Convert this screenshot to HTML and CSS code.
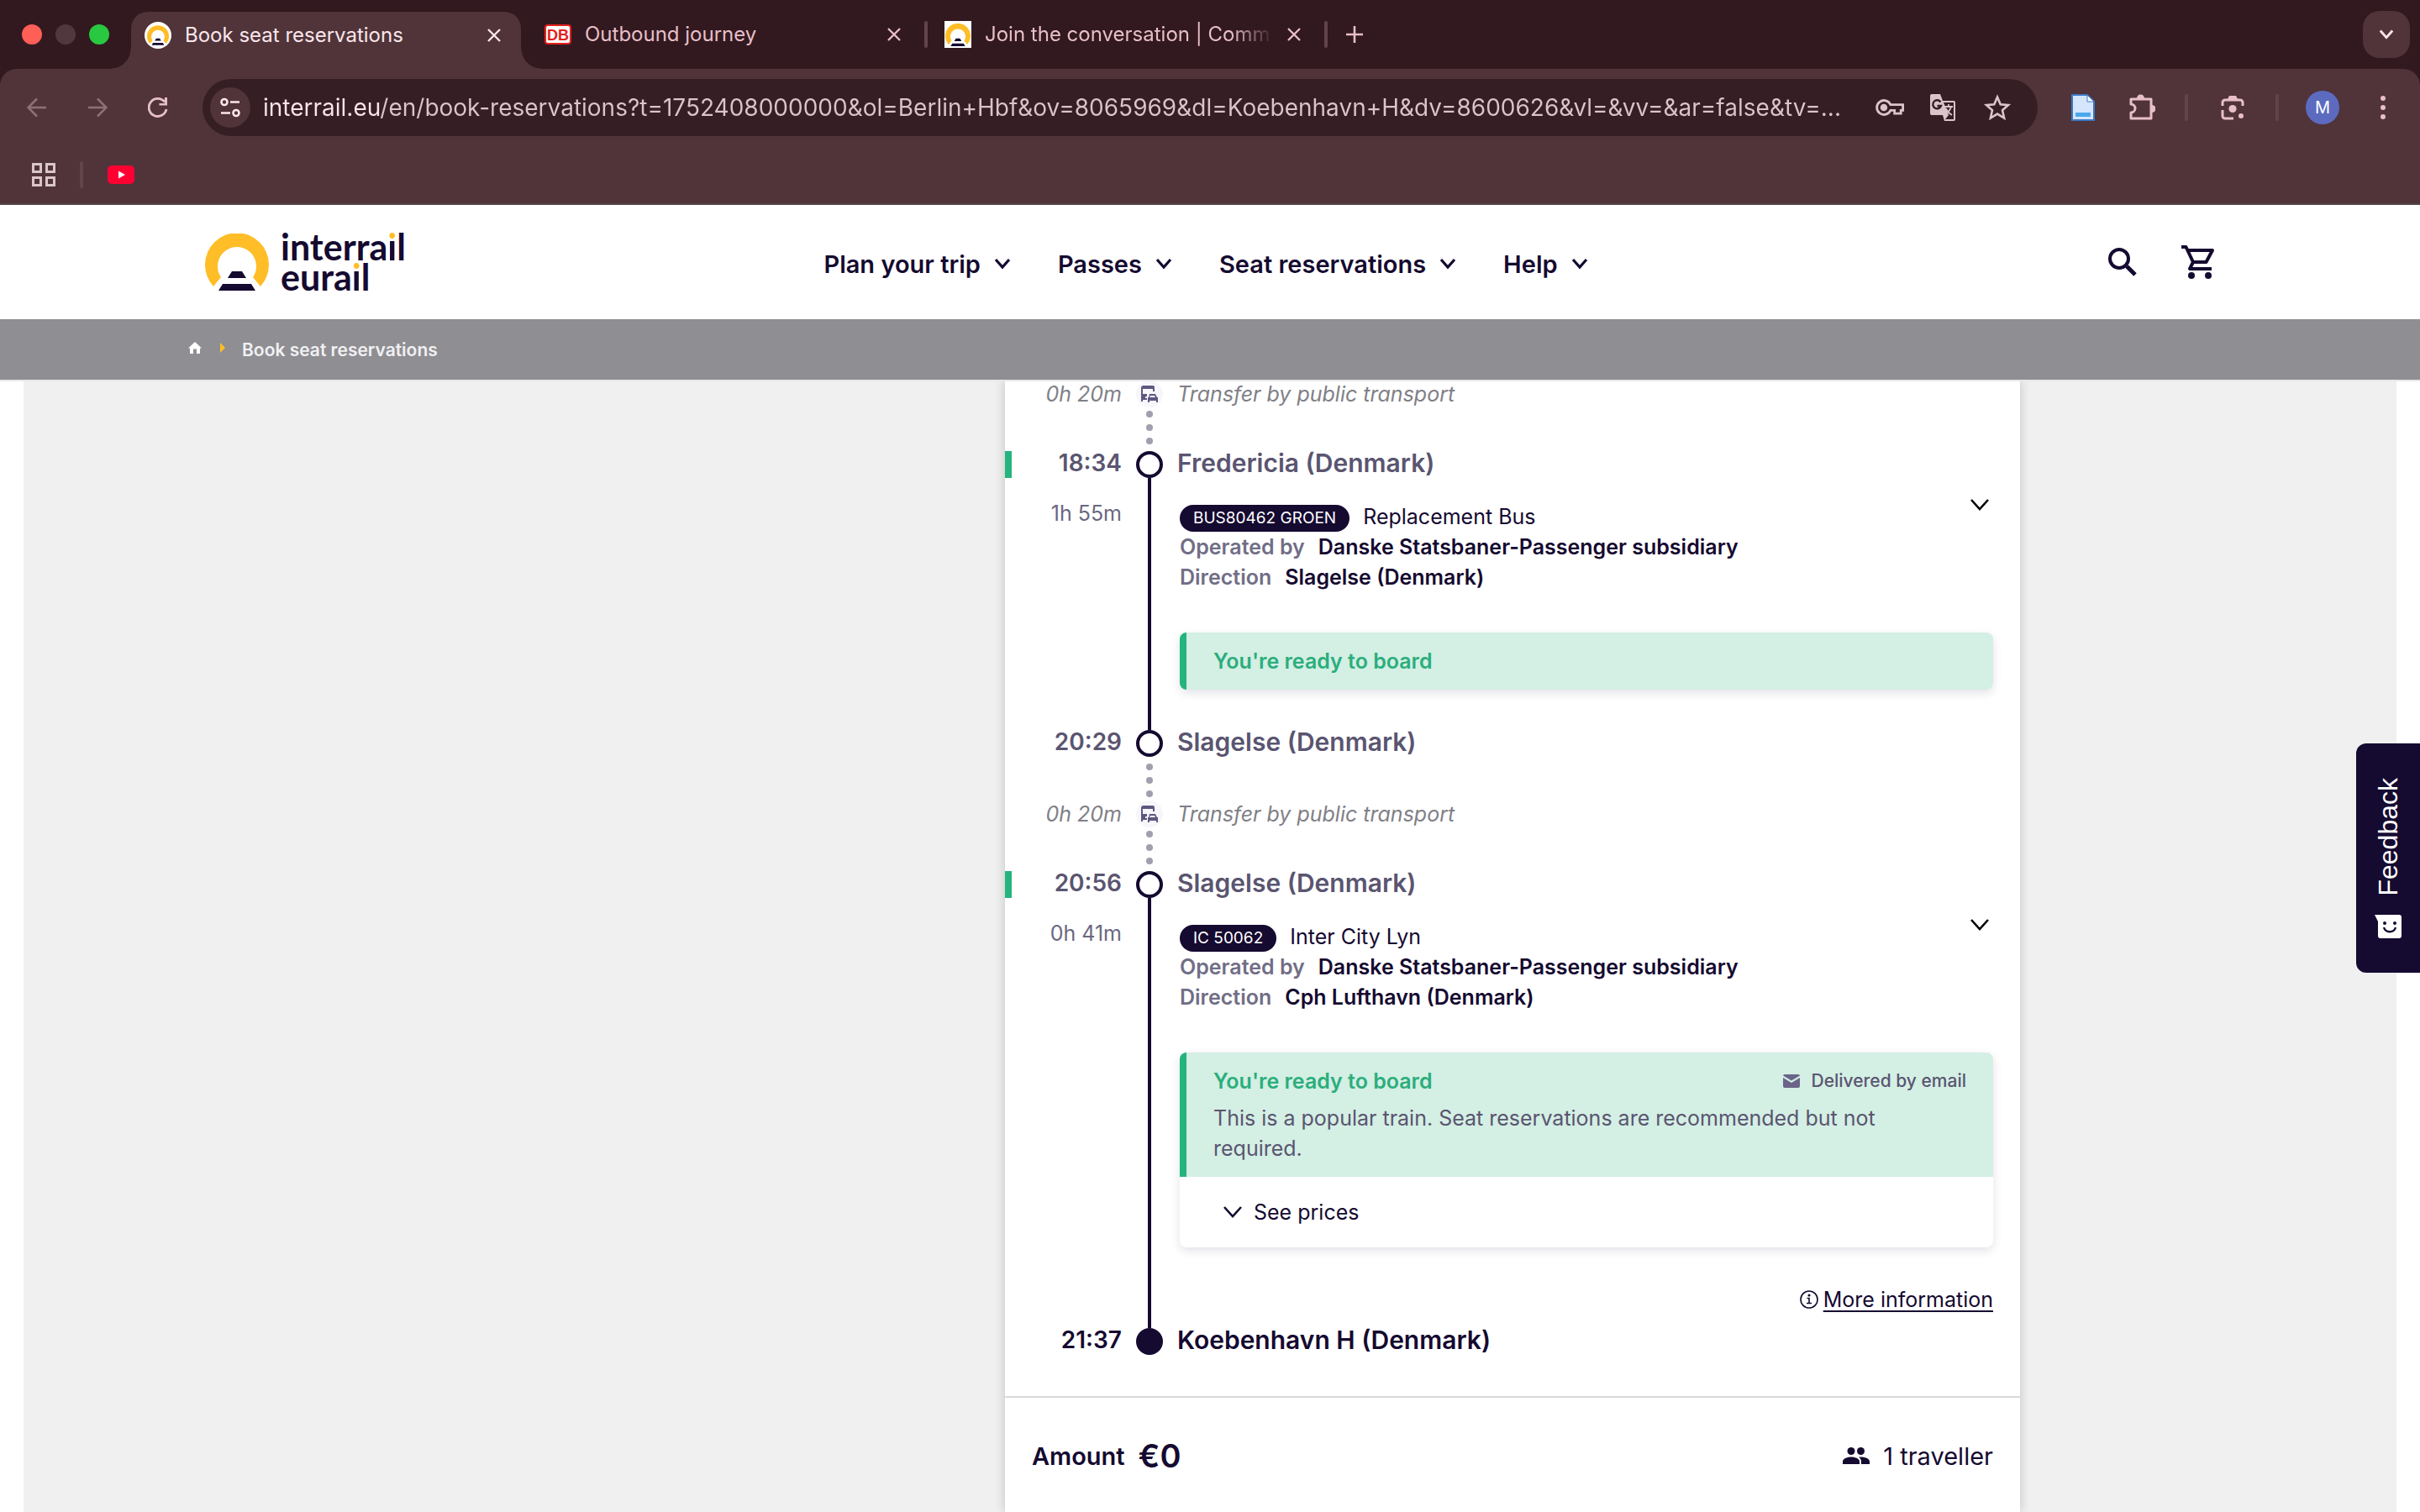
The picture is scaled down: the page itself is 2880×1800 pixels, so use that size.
FILE: index.html
```html
<!DOCTYPE html>
<html lang="en">
<head>
  <meta charset="UTF-8" />
  <title>Book seat reservations</title>
  <link rel="stylesheet" href="styles.css">
</head>
<body>
  <!-- shared icons -->
  <svg class="sprite" aria-hidden="true">
    <symbol id="chevron" viewBox="0 0 24 24"><path d="M2 6l10 11L22 6" fill="none" stroke="currentColor" stroke-width="2.6"/></symbol>
    <symbol id="chevron-bold" viewBox="0 0 20 20"><path d="M2 5l8 9 8-9" fill="none" stroke="currentColor" stroke-width="3.2"/></symbol>
    <symbol id="close" viewBox="0 0 16 16"><path d="M1 1l14 14M15 1L1 15" fill="none" stroke="currentColor" stroke-width="2.4"/></symbol>
    <symbol id="arch" viewBox="0 0 76 68">
      <path d="M10 63A38 38 0 1 1 66 63L57 52A23 23 0 1 0 19 52Z" fill="#ffbd27"/>
      <path d="M32 45h12l5 8H27zM21 60h34l5 8H16z" fill="#150a30"/>
    </symbol>
    <symbol id="transit" viewBox="0 0 20 20">
      <path d="M3 0h11a2 2 0 0 1 2 2v5h-2V4H2v6h5v3H5v2h2v2H2v2H0V2a3 3 0 0 1 3-2z"/>
      <path d="M5 1h6v1H5zM10 10h7l2 4h1v6h-2v-2H10v2H8v-6h1zM11 12l-1 2h7l-1-2z" fill-rule="evenodd"/>
    </symbol>
  </svg>

  <div class="browser">
    <div class="tab-strip">
      <div class="lights"><span class="red"></span><span class="grey"></span><span class="green"></span></div>
      <div class="tab active">
        <svg class="favicon round" viewBox="0 0 32 32"><circle cx="16" cy="16" r="16" fill="#fff"/><use href="#arch" x="3" y="4" width="26" height="24"/></svg>
        <span class="tab-title">Book seat reservations</span>
        <button class="close" aria-label="Close tab"><svg><use href="#close"/></svg></button>
      </div>
      <div class="tab">
        <svg class="favicon" viewBox="0 0 32 32"><rect x="1" y="5" width="30" height="22" rx="3" fill="#fff" stroke="#e3211d" stroke-width="2"/><text x="16" y="23" text-anchor="middle" class="db">DB</text></svg>
        <span class="tab-title">Outbound journey</span>
        <button class="close" aria-label="Close tab"><svg><use href="#close"/></svg></button>
      </div>
      <div class="tab">
        <svg class="favicon" viewBox="0 0 32 32"><rect width="32" height="32" fill="#fff"/><use href="#arch" x="1" y="3" width="30" height="27"/></svg>
        <span class="tab-title fade">Join the conversation | Comm</span>
        <button class="close" aria-label="Close tab"><svg><use href="#close"/></svg></button>
      </div>
      <button class="new-tab" aria-label="New tab"><svg viewBox="0 0 20 20"><path d="M10 0v20M0 10h20" stroke="currentColor" stroke-width="2.6"/></svg></button>
      <button class="tab-search" aria-label="Search tabs"><svg><use href="#chevron-bold"/></svg></button>
    </div>

    <div class="toolbar">
      <button class="tool off" aria-label="Back"><svg viewBox="0 0 24 24"><path d="M23 12H2M12 1.500L1.500 12L12 22.500" fill="none" stroke="currentColor" stroke-width="2.600"/></svg></button>
      <button class="tool off" aria-label="Forward"><svg viewBox="0 0 24 24"><path d="M1 12h21M12 1.500L22.500 12L12 22.500" fill="none" stroke="currentColor" stroke-width="2.600"/></svg></button>
      <button class="tool" aria-label="Reload"><svg viewBox="0 0 24 24"><path d="M22 14A10.500 10.500 0 1 1 20 5.500" fill="none" stroke="currentColor" stroke-width="2.800"/><path d="M23 0v9.500h-9.500V7H20V0z" fill="currentColor"/></svg></button>
      <div class="omnibox">
        <button class="site-info" aria-label="Site information"><svg viewBox="0 0 24 24" fill="none" stroke="currentColor" stroke-width="2.600"><circle cx="5" cy="5.500" r="3.500"/><path d="M12 5.500h11M1 18.500h11"/><circle cx="19" cy="18.500" r="3.500"/></svg></button>
        <input class="address" type="text" aria-label="Address" value="interrail.eu/en/book-reservations?t=1752408000000&amp;ol=Berlin+Hbf&amp;ov=8065969&amp;dl=Koebenhavn+H&amp;dv=8600626&amp;vl=&amp;vv=&amp;ar=false&amp;tv=...">
        <button class="box-tool" aria-label="Passwords"><svg viewBox="0 0 36 24" fill="none" stroke="currentColor" stroke-width="3"><path d="M19 8.500A9 9 0 1 0 19 15.500h5v4h8v-4h2.500v-7z"/><circle cx="10.500" cy="12" r="3" fill="currentColor"/></svg></button>
        <button class="box-tool" aria-label="Translate"><svg viewBox="0 0 32 32"><path d="M2 0h10l3 8h13a2 2 0 0 1 2 2v20a2 2 0 0 1-2 2H17l-2-7H2a2 2 0 0 1-2-2V2a2 2 0 0 1 2-2z" fill="currentColor"/><path d="M16 10h12v20H18l4-5z" fill="#351f24"/><path d="M12.500 9.500A5 5 0 1 0 13 14H8.500" fill="none" stroke="#351f24" stroke-width="2.400"/><path d="M17 15h10M22 12v3M25 15c-1 4-4 7-7 9M19 17c1 4 4 6 7 8" fill="none" stroke="currentColor" stroke-width="1.800"/></svg></button>
        <button class="box-tool" aria-label="Bookmark"><svg viewBox="0 0 32 32"><path d="M16 3.500l3.700 8.800 9.300.8-7 6.200 2.100 9.200-8.100-4.900-8.100 4.900L10 19.300l-7-6.200 9.300-.8z" fill="none" stroke="currentColor" stroke-width="2.600"/></svg></button>
      </div>
      <button class="ext" aria-label="Document extension"><svg viewBox="0 0 32 32"><path d="M3 1h18l8 8v22H3z" fill="#d5e5fb" stroke="#3b78c4" stroke-width="2"/><path d="M21 1v8h8z" fill="#fff" stroke="#3b78c4"/><path d="M7 22h18v5H7z" fill="#4ba8ec"/></svg></button>
      <button class="ext" aria-label="Extensions"><svg viewBox="0 0 32 32"><path d="M3 6h24v23H3v-7a5 5 0 0 0 0-10z" fill="none" stroke="currentColor" stroke-width="3" stroke-linejoin="round"/><path d="M10 5a4.500 4.500 0 0 1 9 0zM28 13a4.500 4.500 0 0 1 0 9z" fill="currentColor"/></svg></button>
      <span class="divider"></span>
      <button class="ext" aria-label="Search with Lens"><svg viewBox="0 0 32 32"><path d="M4 14V10a3 3 0 0 1 3-3h18a3 3 0 0 1 3 3v4M4 19v7a3 3 0 0 0 3 3h10" fill="none" stroke="currentColor" stroke-width="3"/><path d="M10 6l2-4h8l2 4z" fill="currentColor"/><circle cx="16" cy="17.500" r="4.600" fill="currentColor"/><circle cx="26" cy="26" r="3" fill="currentColor"/></svg></button>
      <span class="divider"></span>
      <button class="avatar">M</button>
      <button class="menu" aria-label="Menu"><svg viewBox="0 0 8 28" fill="currentColor"><circle cx="4" cy="3" r="3"/><circle cx="4" cy="14" r="3"/><circle cx="4" cy="25" r="3"/></svg></button>
    </div>

    <div class="bookmarks">
      <button class="apps" aria-label="Apps"><svg viewBox="0 0 28 28" fill="none" stroke="currentColor" stroke-width="3"><path d="M1.500 1.500h9v9h-9zM17.500 1.500h9v9h-9zM1.500 17.500h9v9h-9zM17.500 17.500h9v9h-9z"/></svg></button>
      <span class="divider"></span>
      <a href="#" aria-label="YouTube"><svg class="youtube" viewBox="0 0 32 22"><rect width="32" height="22" rx="5" fill="#ff0033"/><path d="M13 6.500v9l8-4.500z" fill="#fff"/></svg></a>
    </div>
  </div>

  <header class="site-header">
    <a class="logo" href="#">
      <svg><use href="#arch"/></svg>
      <span class="logo-text">interra<span class="dot">i</span>l<br>eura<span class="dot">i</span>l</span>
    </a>
    <nav class="main-nav">
      <button>Plan your trip <svg><use href="#chevron-bold"/></svg></button>
      <button>Passes <svg><use href="#chevron-bold"/></svg></button>
      <button>Seat reservations <svg><use href="#chevron-bold"/></svg></button>
      <button>Help <svg><use href="#chevron-bold"/></svg></button>
    </nav>
    <div class="header-icons">
      <button aria-label="Search"><svg class="search" viewBox="0 0 34 34" fill="none" stroke="currentColor"><circle cx="13" cy="13" r="11" stroke-width="4"/><path d="M22 22l10 10" stroke-width="5"/></svg></button>
      <a href="#" aria-label="Cart"><svg class="cart" viewBox="0 0 40 40"><path d="M0 2h5.500l8.500 18h15.500l7.500-14H8M14 20l-4 8h26" fill="none" stroke="currentColor" stroke-width="4" stroke-linejoin="round"/><circle cx="12" cy="36" r="4" fill="currentColor"/><circle cx="32" cy="36" r="4" fill="currentColor"/></svg></a>
    </div>
  </header>

  <div class="breadcrumb">
    <a href="#" aria-label="Home"><svg class="home" viewBox="0 0 16 14"><path d="M8 0l8 7.500h-2V14h-4V8.500H6V14H2V7.500H0z" fill="#fff"/></svg></a>
    <svg class="crumb-arrow" viewBox="0 0 6 12"><path d="M0 0l6 6-6 6z" fill="#ffbd27"/></svg>
    <span>Book seat reservations</span>
  </div>

  <main class="content">
    <section class="card">
      <div class="timeline">
        <div class="row transfer">
          <span class="time">0h 20m</span>
          <span class="rail"><span class="mode"><svg><use href="#transit"/></svg></span></span>
          <span class="place">Transfer by public transport</span>
        </div>
        <div class="dots after"><i></i><i></i><i></i></div>

        <div class="row stop ready">
          <span class="time">18:34</span>
          <span class="rail"><span class="point"></span></span>
          <span class="place">Fredericia (Denmark)</span>
        </div>
        <div class="row leg">
          <span class="time">1h 55m</span>
          <span class="rail"><span class="line"></span></span>
          <div class="details">
            <div class="leg-head">
              <div class="leg-info">
                <div><span class="badge">BUS80462 GROEN</span> <span>Replacement Bus</span></div>
                <div><span class="label">Operated by</span> <b>Danske Statsbaner-Passenger subsidiary</b></div>
                <div><span class="label">Direction</span> <b>Slagelse (Denmark)</b></div>
              </div>
              <button class="expand" aria-label="Show stops"><svg><use href="#chevron"/></svg></button>
            </div>
            <div class="notice">
              <div class="board"><strong>You're ready to board</strong></div>
            </div>
          </div>
        </div>

        <div class="row stop">
          <span class="time">20:29</span>
          <span class="rail"><span class="point"></span></span>
          <span class="place">Slagelse (Denmark)</span>
        </div>
        <div class="dots before"><i></i><i></i><i></i></div>
        <div class="row transfer">
          <span class="time">0h 20m</span>
          <span class="rail"><span class="mode"><svg><use href="#transit"/></svg></span></span>
          <span class="place">Transfer by public transport</span>
        </div>
        <div class="dots after"><i></i><i></i><i></i></div>

        <div class="row stop ready">
          <span class="time">20:56</span>
          <span class="rail"><span class="point"></span></span>
          <span class="place">Slagelse (Denmark)</span>
        </div>
        <div class="row leg last">
          <span class="time">0h 41m</span>
          <span class="rail"><span class="line"></span></span>
          <div class="details">
            <div class="leg-head">
              <div class="leg-info">
                <div><span class="badge">IC 50062</span> <span>Inter City Lyn</span></div>
                <div><span class="label">Operated by</span> <b>Danske Statsbaner-Passenger subsidiary</b></div>
                <div><span class="label">Direction</span> <b>Cph Lufthavn (Denmark)</b></div>
              </div>
              <button class="expand" aria-label="Show stops"><svg><use href="#chevron"/></svg></button>
            </div>
            <div class="notice">
              <div class="board">
                <div class="board-head">
                  <strong>You're ready to board</strong>
                  <span class="delivery"><svg viewBox="0 0 20 16"><path d="M2 0h16a2 2 0 0 1 2 1.500l-10 6-10-6A2 2 0 0 1 2 0zM0 4l10 6 10-6v10a2 2 0 0 1-2 2H2a2 2 0 0 1-2-2z" fill="#6a6588"/></svg>Delivered by email</span>
                </div>
                <p>This is a popular train. Seat reservations are recommended but not required.</p>
              </div>
              <button class="prices"><svg><use href="#chevron"/></svg>See prices</button>
            </div>
            <div class="more"><svg viewBox="0 0 22 22" fill="none" stroke="currentColor" stroke-width="1.600"><circle cx="11" cy="11" r="10"/><path d="M8.500 9.500H11V15M8 15.500h6"/><circle cx="11" cy="6" r=".8"/></svg><a href="#">More information</a></div>
          </div>
        </div>

        <div class="row stop end">
          <span class="time">21:37</span>
          <span class="rail"><span class="point"></span></span>
          <span class="place">Koebenhavn H (Denmark)</span>
        </div>
      </div>

      <div class="summary">
        <span class="amount">Amount <b>€0</b></span>
        <span class="travellers"><svg viewBox="0 0 32 20" fill="currentColor"><circle cx="10" cy="4.500" r="4.500"/><circle cx="21.500" cy="4.500" r="4.500"/><path d="M0 20v-3c0-4 6-5.500 10-5.500s10 1.500 10 5.500v3zM22 20v-3c0-2-1-4-3-5.400 5-.6 13 1 13 5.400v3z"/></svg>1 traveller</span>
      </div>
    </section>
  </main>

  <button class="feedback">
    <svg viewBox="0 0 32 28"><path d="M0 0h29a3 3 0 0 1 3 3v22a3 3 0 0 1-3 3H7a3 3 0 0 1-3-3V8z" fill="#fff"/><circle cx="12" cy="10" r="2" fill="#150a30"/><circle cx="24" cy="10" r="2" fill="#150a30"/><path d="M11 15c2 7 12 7 14 0" fill="none" stroke="#150a30" stroke-width="2.400"/></svg>
    <span>Feedback</span>
  </button>
</body>
</html>
```
FILE: styles.css
```css
* {
  box-sizing: border-box;
}

body {
  margin: 0;
  font-family: Inter, "Liberation Sans", sans-serif;
  font-size: 25px;
  color: #150a30;
  background-color: #fff;
}

button {
  display: flex;
  align-items: center;
  justify-content: center;
  padding: 0;
  border: 0;
  background: none;
  color: inherit;
  font: inherit;
  cursor: pointer;
}

a {
  color: inherit;
}

svg {
  display: block;
  flex: none;
}

.sprite {
  position: absolute;
  width: 0;
  height: 0;
}

/* browser window */
.browser {
  background-color: #32191f;
  color: #e8bfc9;
}

.tab-strip {
  display: flex;
  align-items: center;
  height: 82px;
  padding-right: 12px;
}

.lights {
  display: flex;
  gap: 16px;
  width: 156px;
  padding-left: 26px;
}

.lights span {
  width: 24px;
  height: 24px;
  border-radius: 50%;
}

.lights .red { background-color: #ff5f57; }
.lights .grey { background-color: #50383e; }
.lights .green { background-color: #28c840; }

.tab {
  position: relative;
  display: flex;
  align-items: center;
  gap: 16px;
  width: 464px;
  height: 56px;
  margin-right: 12px;
  padding: 0 24px 0 16px;
}

.tab:not(.active)::after,
.divider {
  width: 4px;
  height: 32px;
  border-radius: 2px;
  background-color: #62444b;
}

.tab:not(.active)::after {
  content: "";
  position: absolute;
  right: -8px;
}

.tab.active {
  height: 68px;
  align-self: flex-end;
  padding-bottom: 12px;
  border-radius: 20px 20px 0 0;
  background-color: #50343a;
  color: #fbe6ea;
}

/* flared feet of the open tab */
.tab.active::before,
.tab.active::after {
  content: "";
  position: absolute;
  bottom: 0;
  width: 24px;
  height: 24px;
}

.tab.active::before {
  left: -24px;
  background: radial-gradient(circle at 0 0, transparent 23px, #50343a 24px);
}

.tab.active::after {
  right: -24px;
  background: radial-gradient(circle at 100% 0, transparent 23px, #50343a 24px);
}

.favicon {
  width: 32px;
  height: 32px;
}

.db {
  font: bold 18px "Liberation Sans", sans-serif;
  fill: #e3211d;
}

.tab-title {
  flex: 1;
  overflow: hidden;
  white-space: nowrap;
  font-size: 24px;
  line-height: 32px;
}

.fade {
  mask-image: linear-gradient(to right, #000 85%, transparent);
}

.close, .close svg {
  width: 16px;
  height: 16px;
}

.new-tab svg {
  width: 20px;
  height: 20px;
  margin-left: 18px;
}

.tab-search {
  width: 56px;
  height: 56px;
  margin-left: auto;
  border-radius: 20px;
  background-color: #50343a;
  color: #fbe6ea;
}

.tab-search svg {
  width: 18px;
  height: 18px;
}

.toolbar {
  display: flex;
  align-items: center;
  height: 92px;
  padding: 0 40px 0 8px;
  border-radius: 20px 20px 0 0;
  background-color: #50343a;
}

.tool {
  width: 72px;
  height: 56px;
}

.tool svg {
  width: 24px;
  height: 24px;
}

.off {
  color: #8f6f76;
}

.omnibox {
  display: flex;
  flex: 1;
  align-items: center;
  height: 68px;
  margin: 0 18px 0 17px;
  padding: 0 16px 0 9px;
  border-radius: 34px;
  background-color: #351f24;
  color: #dac5ca;
}

.site-info {
  width: 48px;
  height: 48px;
  margin-right: 15px;
  border-radius: 50%;
  background-color: #50343a;
  color: #fbe6ea;
}

.site-info svg {
  width: 24px;
  height: 24px;
}

.address {
  flex: 1;
  min-width: 0;
  padding: 0;
  border: 0;
  outline: 0;
  background: linear-gradient(to right, #fbe6ea 140px, #dac5ca 140px) text;
  color: transparent;
  font: inherit;
  font-size: 28px;
}

.box-tool {
  width: 64px;
  height: 56px;
}

.box-tool svg {
  width: 34px;
  height: 32px;
}

.ext {
  width: 72px;
  height: 56px;
  margin-right: -2px;
}

.ext svg {
  width: 32px;
  height: 32px;
}

.toolbar .divider {
  margin: 0 17px;
}

.avatar {
  width: 40px;
  height: 40px;
  margin-left: 15px;
  border-radius: 50%;
  background-color: #5c6bc0;
  color: #fff;
  font-size: 20px;
}

.menu {
  margin-left: auto;
  padding-left: 48px;
}

.menu svg {
  width: 8px;
  height: 28px;
}

.bookmarks {
  display: flex;
  align-items: center;
  gap: 29px;
  height: 70px;
  padding: 0 38px;
  border-bottom: 2px solid #54464b;
  background-color: #50343a;
  color: #dac5ca;
}

.apps svg {
  width: 28px;
  height: 28px;
}

.youtube {
  width: 32px;
  height: 22px;
}

/* site header */
.site-header {
  display: grid;
  grid-template-columns: 1fr auto 1fr;
  align-items: center;
  height: 136px;
  padding: 0 244px;
}

.logo {
  display: flex;
  align-items: center;
  gap: 14px;
  text-decoration: none;
}

.logo svg {
  width: 76px;
  height: 68px;
}

.logo-text {
  font-family: Lato, sans-serif;
  font-size: 43px;
  font-weight: 700;
  line-height: 36px;
}

.dot {
  background: linear-gradient(#ffbd27 36%, #150a30 36%) text;
  color: transparent;
}

.main-nav {
  display: flex;
  gap: 56px;
  padding: 4px 10px 0 0;
}

.main-nav button {
  gap: 16px;
  font-size: 29px;
  font-weight: 600;
}

.main-nav svg {
  width: 20px;
  height: 20px;
}

.header-icons {
  display: flex;
  align-items: center;
  justify-content: flex-end;
  gap: 53px;
}

.search {
  width: 34px;
  height: 34px;
}

.cart {
  width: 40px;
  height: 40px;
}

.breadcrumb {
  position: relative;
  display: flex;
  align-items: center;
  height: 72px;
  padding-left: 224px;
  background-color: #8f8e93;
  box-shadow: 0 2px 0 #e8e8e8;
  color: #f0f0f2;
  font-size: 21px;
  font-weight: 600;
}

.home {
  width: 16px;
  height: 14px;
}

.breadcrumb svg {
  margin-bottom: 4px;
}

.crumb-arrow {
  width: 6px;
  height: 12px;
  margin: 0 20px 0 22px;
}

/* journey card */
.content {
  display: grid;
  grid-template-columns: 146fr 151fr 56fr;
  margin: 0 28px;
  background-color: #f0f0f0;
}

.card {
  grid-column: 2;
  background-color: #fff;
  box-shadow: 0 0 12px rgba(0, 0, 0, 0.2);
}

.timeline {
  padding: 1px 0 49px;
}

.row {
  display: grid;
  grid-template-columns: 131px 66px 1fr;
  align-items: center;
  min-height: 32px;
  padding-right: 32px;
  border-left: 8px solid transparent;
}

.time {
  text-align: right;
}

.rail {
  display: flex;
  justify-content: center;
}

.stop {
  font-weight: 600;
  line-height: 28px;
  color: #5a5570;
}

.stop .time {
  padding-bottom: 4px;
  font-size: 28px;
}

.stop .place {
  padding-bottom: 4px;
  font-size: 30px;
}

.ready {
  border-left-color: #24b47e;
}

.point {
  width: 32px;
  height: 32px;
  border: 4px solid #150a30;
  border-radius: 50%;
}

.end {
  color: #150a30;
}

.end .point {
  background-color: #150a30;
}

.transfer {
  font-style: italic;
  line-height: 32px;
  color: #808087;
}

.mode {
  display: flex;
  align-items: center;
  justify-content: center;
  width: 32px;
  height: 32px;
  border-radius: 50%;
  background-color: #f7f6fb;
}

.mode svg {
  width: 20px;
  height: 20px;
  fill: #5d5880;
}

.dots {
  display: flex;
  flex-direction: column;
  gap: 8px;
  width: 8px;
  margin-left: 168px;
}

.before {
  padding: 8px 0 4px;
}

.after {
  padding: 4px 0 8px;
}

.dots i {
  height: 8px;
  border-radius: 50%;
  background-color: #a19eae;
}

.leg {
  align-items: stretch;
}

.leg .time {
  padding-top: 28px;
  line-height: 28px;
  color: #6b6880;
}

.line {
  width: 4px;
  background-color: #150a30;
}

.details {
  padding: 16px 0 48px 3px;
}

.last .details {
  padding-bottom: 16px;
}

.leg-head {
  display: flex;
  justify-content: space-between;
}

.leg-info {
  padding-top: 12px;
  line-height: 36px;
}

.leg-info div {
  display: flex;
  gap: 16px;
}

.leg-info b {
  font-weight: 600;
}

.badge {
  height: 32px;
  margin-top: 4px;
  padding: 0 16px;
  border-radius: 16px;
  background-color: #150a30;
  color: #fff;
  font-size: 19px;
  line-height: 32px;
}

.label {
  font-weight: 600;
  color: #716e86;
}

.expand {
  width: 32px;
  height: 32px;
  color: #000;
}

.expand svg,
.prices svg {
  width: 24px;
  height: 24px;
}

.notice {
  margin-top: 48px;
  overflow: hidden;
  border-radius: 8px;
  box-shadow: 0 4px 12px rgba(21, 10, 48, 0.12);
  line-height: 36px;
}

.board {
  padding: 16px 32px;
  border-left: 8px solid #24b47e;
  background-color: #d4efe4;
  color: #5a5570;
}

.board strong {
  font-weight: 600;
  color: #2bae7c;
}

.board-head {
  display: flex;
  justify-content: space-between;
  margin-bottom: 8px;
}

.board p {
  max-width: 840px;
  margin: 0;
}

.delivery {
  display: flex;
  align-items: center;
  gap: 14px;
  font-size: 21px;
  font-weight: 500;
}

.delivery svg {
  width: 20px;
  height: 16px;
}

.prices {
  gap: 13px;
  height: 84px;
  padding-left: 51px;
}

.more {
  display: flex;
  align-items: center;
  justify-content: flex-end;
  gap: 6px;
  margin-top: 44px;
  line-height: 36px;
}

.more a {
  text-underline-offset: 4px;
}

.more svg {
  width: 22px;
  height: 22px;
}

.summary {
  display: flex;
  align-items: center;
  justify-content: space-between;
  height: 138px;
  padding: 2px 32px 0;
  border-top: 2px solid #d9d9d9;
  font-size: 29px;
}

.amount {
  display: flex;
  align-items: center;
  gap: 16px;
  font-weight: 600;
}

.amount b {
  font-size: 38px;
  font-weight: 600;
}

.travellers {
  display: flex;
  align-items: center;
  gap: 16px;
}

.travellers svg {
  width: 32px;
  height: 20px;
}

/* feedback tab stuck to the window's right edge */
.feedback {
  position: fixed;
  top: 885px;
  right: 0;
  flex-direction: column-reverse;
  gap: 22px;
  width: 76px;
  height: 273px;
  border-radius: 12px 0 0 12px;
  background-color: #150a30;
  color: #fff;
  font-family: "Liberation Sans", sans-serif;
  font-size: 32px;
}

.feedback span {
  writing-mode: vertical-rl;
  transform: rotate(180deg);
}

.feedback svg {
  width: 32px;
  height: 28px;
}
```
